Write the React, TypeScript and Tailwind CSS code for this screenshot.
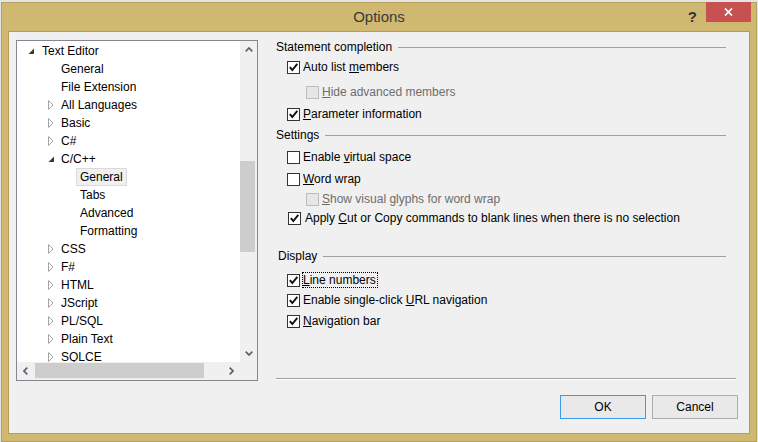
import React from "react";

type Row = { level: number; exp?: "open" | "closed"; text: string; selected?: boolean };

const rows: Row[] = [
  { level: 0, exp: "open", text: "Text Editor" },
  { level: 1, text: "General" },
  { level: 1, text: "File Extension" },
  { level: 1, exp: "closed", text: "All Languages" },
  { level: 1, exp: "closed", text: "Basic" },
  { level: 1, exp: "closed", text: "C#" },
  { level: 1, exp: "open", text: "C/C++" },
  { level: 2, text: "General", selected: true },
  { level: 2, text: "Tabs" },
  { level: 2, text: "Advanced" },
  { level: 2, text: "Formatting" },
  { level: 1, exp: "closed", text: "CSS" },
  { level: 1, exp: "closed", text: "F#" },
  { level: 1, exp: "closed", text: "HTML" },
  { level: 1, exp: "closed", text: "JScript" },
  { level: 1, exp: "closed", text: "PL/SQL" },
  { level: 1, exp: "closed", text: "Plain Text" },
  { level: 1, exp: "closed", text: "SQLCE" },
];

const padByLevel = ["pl-[11px]", "pl-[30px]", "pl-[49px]"];

function Expander({ kind, level }: { kind?: "open" | "closed"; level: number }) {
  return (
    <span className="w-[10px] h-[18px] flex items-center shrink-0">
      {kind === "open" && (
        <svg width="7" height="7" viewBox="0 0 7 7" className={level === 0 ? "" : "ml-[1px]"}>
          <polygon points="6,0.5 6,6 0.5,6" fill="#3a3a3a" />
        </svg>
      )}
      {kind === "closed" && (
        <svg width="6" height="10" viewBox="0 0 6 10" className="ml-[1px]">
          <polygon points="0.5,0.5 5,5 0.5,9.5" fill="none" stroke="#a6a6a6" strokeWidth="1" />
        </svg>
      )}
    </span>
  );
}

function Check({ checked, disabled }: { checked?: boolean; disabled?: boolean }) {
  return (
    <span
      className={
        "w-[13px] h-[13px] shrink-0 border flex items-center justify-center " +
        (disabled ? "border-[#bcbcbc] bg-[#e6e6e6]" : "border-[#333333] bg-white")
      }
    >
      {checked && (
        <svg width="11" height="11" viewBox="0 0 11 11">
          <polyline points="1.8,5.2 4.3,8 9.3,1.8" fill="none" stroke="#111" strokeWidth="1.9" />
        </svg>
      )}
    </span>
  );
}

function Header({ text, extra = "" }: { text: string; extra?: string }) {
  return (
    <div className={"flex items-center pr-[10px] " + extra}>
      <span className="leading-[15px]">{text}</span>
      <span className="flex-1 h-px bg-[#a0a0a0] ml-[6px] mt-[1px]" />
    </div>
  );
}

function Opt({
  h,
  pl,
  gap,
  checked,
  disabled,
  children,
}: {
  h: string;
  pl: string;
  gap: string;
  checked?: boolean;
  disabled?: boolean;
  children: React.ReactNode;
}) {
  return (
    <div className={"flex items-center " + h + " " + pl}>
      <Check checked={checked} disabled={disabled} />
      <span className={"leading-[15px] " + gap + (disabled ? " text-[#6d6d6d]" : " text-black")}>{children}</span>
    </div>
  );
}

export default function App() {
  return (
    <div className="w-[758px] h-[442px] overflow-hidden bg-[#e4e4e4] pt-[2px] pl-[1px] font-['Liberation_Sans',Arial,sans-serif] text-[12px] text-black">
      <div className="w-[756px] h-[440px] border border-[#b8a05a] bg-[#cfb870] flex flex-col">
        {/* title bar */}
        <div className="h-[28px] grid grid-cols-[1fr_auto_1fr] shrink-0">
          <div />
          <div className="flex items-center text-[15px] text-[#3a3a3a] pt-[1px]">Options</div>
          <div className="flex justify-end items-start">
            <span className="mt-[5px] text-[15px] leading-[18px] font-bold text-[#333]">?</span>
            <div className="-mt-[1px] ml-[9px] mr-[5px] w-[45px] h-[20px] bg-[#c75050] flex items-center justify-center">
              <svg width="9" height="8" viewBox="0 0 9 8">
                <line x1="1" y1="0.5" x2="8" y2="7.5" stroke="#fff" strokeWidth="1.7" />
                <line x1="8" y1="0.5" x2="1" y2="7.5" stroke="#fff" strokeWidth="1.7" />
              </svg>
            </div>
          </div>
        </div>

        {/* client area */}
        <div className="flex-1 mx-[6px] mb-[7px] border border-[#b59d57] bg-[#f0f0f0] flex flex-col pl-[7px] pt-[8px]">
          <div className="flex h-[341px]">
            {/* tree */}
            <div className="w-[242px] h-[341px] border border-[#828790] bg-white grid grid-cols-[223px_17px] grid-rows-[321px_18px]">
              <div className="overflow-hidden pt-[1px]">
                {rows.map((r, i) => (
                  <div key={i} className={"h-[18px] flex items-center whitespace-nowrap " + padByLevel[r.level]}>
                    <Expander kind={r.exp} level={r.level} />
                    <span
                      className={
                        "h-[18px] px-[3px] border flex items-center leading-[15px] " +
                        (r.selected ? "border-[#dadada] bg-[#f0f0f0]" : "border-transparent")
                      }
                    >
                      {r.text}
                    </span>
                  </div>
                ))}
              </div>
              {/* vertical scrollbar */}
              <div className="bg-[#f0f0f0] flex flex-col">
                <div className="h-[17px] flex items-center justify-center shrink-0">
                  <svg width="8" height="5" viewBox="0 0 8 5">
                    <polyline points="0.7,4.3 4,1 7.3,4.3" fill="none" stroke="#606060" strokeWidth="1.7" />
                  </svg>
                </div>
                <div className="flex-1 pt-[103px]">
                  <div className="h-[91px] mr-[2px] bg-[#cdcdcd]" />
                </div>
                <div className="h-[17px] flex items-center justify-center shrink-0">
                  <svg width="8" height="5" viewBox="0 0 8 5">
                    <polyline points="0.7,0.7 4,4 7.3,0.7" fill="none" stroke="#606060" strokeWidth="1.7" />
                  </svg>
                </div>
              </div>
              {/* horizontal scrollbar */}
              <div className="bg-[#f0f0f0] flex items-stretch">
                <div className="w-[17px] flex items-center justify-center shrink-0">
                  <svg width="5" height="8" viewBox="0 0 5 8">
                    <polyline points="4.3,0.7 1,4 4.3,7.3" fill="none" stroke="#606060" strokeWidth="1.7" />
                  </svg>
                </div>
                <div className="flex-1 py-[1px] pl-[1px]">
                  <div className="w-[169px] h-[15px] bg-[#cdcdcd]" />
                </div>
                <div className="w-[17px] flex items-center justify-center shrink-0">
                  <svg width="5" height="8" viewBox="0 0 5 8">
                    <polyline points="0.7,0.7 4,4 0.7,7.3" fill="none" stroke="#606060" strokeWidth="1.7" />
                  </svg>
                </div>
              </div>
              <div className="bg-[#f0f0f0]" />
            </div>

            {/* options panel */}
            <div className="ml-[18px] w-[460px] flex flex-col">
              <Header text="Statement completion" extra="h-[14px]" />
              <Opt h="h-[26px]" pl="pl-[11px]" gap="ml-[3px]" checked>
                Auto list <u>m</u>embers
              </Opt>
              <Opt h="h-[22px] pt-[2px]" pl="pl-[30px]" gap="ml-[3px]" disabled>
                <u>H</u>ide advanced members
              </Opt>
              <Opt h="h-[24px]" pl="pl-[11px]" gap="ml-[3px]" checked>
                <u>P</u>arameter information
              </Opt>
              <Header text="Settings" extra="h-[18px]" />
              <Opt h="h-[26px]" pl="pl-[11px]" gap="ml-[3px]">
                Enable <u>v</u>irtual space
              </Opt>
              <Opt h="h-[18px]" pl="pl-[11px]" gap="ml-[3px]">
                <u>W</u>ord wrap
              </Opt>
              <Opt h="h-[22px]" pl="pl-[30px]" gap="ml-[3px]" disabled>
                <u>S</u>how visual glyphs for word wrap
              </Opt>
              <Opt h="h-[16px]" pl="pl-[12px]" gap="ml-[4px]" checked>
                Apply <u>C</u>ut or Copy commands to blank lines when there is no selection
              </Opt>
              <div className="h-[21px]" />
              <Header text="Display" extra="h-[18px] pl-[2px]" />
              <div className="h-[5px]" />
              <div className="flex items-center h-[20px] pl-[11px]">
                <Check checked />
                <span className="ml-[2px] h-[16px] pr-[1px] border border-dotted border-black flex items-center leading-[14px]">
                  <u>L</u>ine numbers
                </span>
              </div>
              <Opt h="h-[20px]" pl="pl-[11px]" gap="ml-[3px]" checked>
                Enable single-click <u>U</u>RL navigation
              </Opt>
              <Opt h="h-[22px]" pl="pl-[11px]" gap="ml-[3px]" checked>
                <u>N</u>avigation bar
              </Opt>
              <div className="flex-1" />
              <div className="h-px bg-[#a0a0a0]" />
              <div className="h-px bg-white mb-[1px]" />
            </div>
          </div>

          {/* buttons */}
          <div className="flex justify-end gap-[6px] mt-[14px] pr-[11px]">
            <button className="w-[86px] h-[24px] border border-[#3d9ae8] bg-[#e9e9e9] text-[12px] text-black">OK</button>
            <button className="w-[86px] h-[24px] border border-[#adadad] bg-[#e9e9e9] text-[12px] text-black">Cancel</button>
          </div>
        </div>
      </div>
    </div>
  );
}
